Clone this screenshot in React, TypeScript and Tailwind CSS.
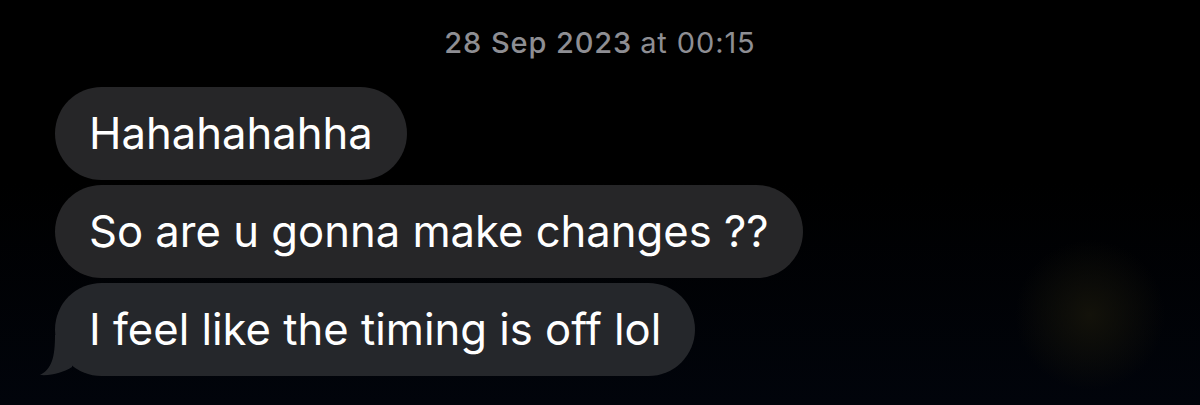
const messages = [
  "Hahahahahha",
  "So are u gonna make changes ??",
  "I feel like the timing is off lol",
];

const BubbleTail = () => (
  <svg
    className="absolute left-[-15px] bottom-0"
    width="40"
    height="41"
    viewBox="0 0 40 41"
  >
    <path d="M15 0 C15 22 12 34 0 40 C12 41 24 37 32 32 L32 0 Z" fill="#25272b" />
  </svg>
);

export default function App() {
  return (
    <div
      className="h-[405px] w-full overflow-hidden bg-black bg-[radial-gradient(circle_at_1090px_315px,#13120a_0,transparent_75px),linear-gradient(to_bottom,#000_45%,#01040b)]"
      style={{ fontFamily: 'Inter, "Liberation Sans", sans-serif' }}
    >
      <div className="flex h-[85px] items-center justify-center text-[29px] leading-none tracking-[0.9px] text-[#8e8e93]">
        <span className="font-medium">28 Sep 2023</span>
        <span className="ml-[8px]">at 00:15</span>
      </div>

      <div className="mt-[2px] flex flex-col items-start gap-[5px] pl-[55px]">
        {messages.map((msg, i) => {
          const last = i === messages.length - 1;
          return (
            <div
              key={msg}
              className={`relative flex h-[93px] items-center rounded-full px-[34px] text-[43.6px] leading-none text-white ${
                last ? "bg-[#25272b]" : "bg-[#262628]"
              }`}
            >
              {msg}
              {last && <BubbleTail />}
            </div>
          );
        })}
      </div>
    </div>
  );
}
